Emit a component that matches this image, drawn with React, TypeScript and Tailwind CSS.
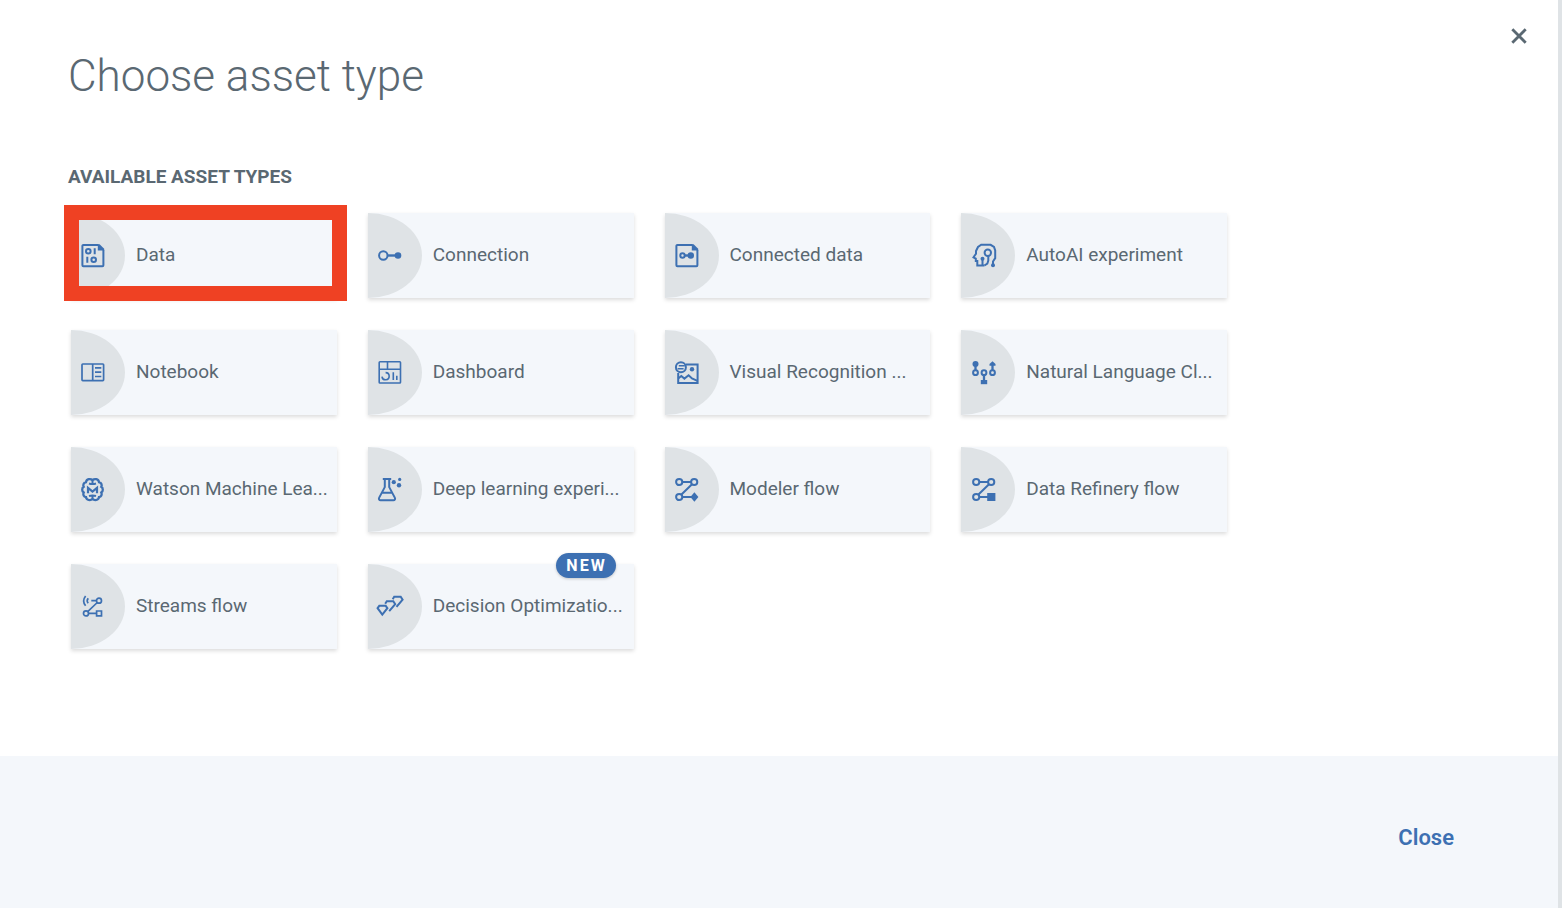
import type { ReactNode } from "react";

const documentOutline = (
  <>
    <path d="M17.5 2H2.4a1 1 0 0 0-1 1v19.3a1 1 0 0 0 1 1h19a1 1 0 0 0 1-1V7" />
    <path d="M16.8 1.2h1.8l4.6 4.6v1.6h-6.4z" fill="currentColor" stroke="none" />
  </>
);

const icons: Record<string, ReactNode> = {
  data: (
    <>
      {documentOutline}
      <circle cx="7.3" cy="8.3" r="2.3" />
      <path d="M13.7 5.3v6M6.3 13.7v6" />
      <circle cx="12.7" cy="16.7" r="2.3" />
    </>
  ),
  connection: (
    <>
      <circle cx="5.3" cy="12.5" r="4.2" />
      <path d="M9.5 12.5H19" strokeWidth="2.4" />
      <circle cx="20" cy="12.5" r="3.3" fill="currentColor" stroke="none" />
    </>
  ),
  connectedData: (
    <>
      {documentOutline}
      <circle cx="7.5" cy="12.5" r="2.2" />
      <path d="M9.7 12.5h5" strokeWidth="2.4" />
      <circle cx="15.8" cy="12.5" r="3.2" fill="currentColor" stroke="none" />
    </>
  ),
  autoAi: (
    <>
      <path d="M13.5 22.5H6.3V18H4.8v-2.4l-2.3-1.3L5 10.7V8l2-4 3.2-2.2h9.4L23 4l1.2 3.5v7.6L22 18.5V21" />
      <circle cx="16.8" cy="9.7" r="3.2" />
      <path d="M17.3 13v4.5l-1 3.2-2.8 1.8M11.5 16v6" />
      <circle cx="11.5" cy="15.8" r="2" fill="currentColor" stroke="none" />
      <circle cx="22" cy="22.2" r="2" fill="currentColor" stroke="none" />
    </>
  ),
  notebook: (
    <g strokeWidth="1.7">
      <rect x="1" y="4" width="21.6" height="16.6" rx="0.8" />
      <path d="M11.7 4v16.6M14 7.9h6.3M14 12.2h6.3M14 16.5h6.3" />
    </g>
  ),
  dashboard: (
    <g strokeWidth="1.6">
      <rect x="1.2" y="1.7" width="21.3" height="21.3" rx="0.8" />
      <path d="M1.2 9.2h21.3M9.5 1.7v7.5M15.3 12.3V20M18.8 15.7V20" />
      <path d="M7.6 12.6a3.6 3.6 0 1 1-3.6 4" />
    </g>
  ),
  visual: (
    <>
      <path d="M11 4.5h11.6v18.6H3.2v-10" />
      <circle cx="5.9" cy="7.2" r="5" />
      <path d="M3.8 5.8h6M2.6 8.8h6" strokeWidth="1.6" />
      <circle cx="17" cy="9.3" r="2.2" fill="currentColor" stroke="none" />
      <path d="M3.2 18.5 6.3 16l3.1 2.6 4.2-3.3 3.4 3.2 5.4 2.4" />
    </>
  ),
  language: (
    <>
      <circle cx="4.5" cy="4" r="3" fill="currentColor" stroke="none" />
      <path d="M4.5 6v4M21.5 5v5M13 15.5V21" strokeWidth="2.3" />
      <path d="M21.5 1.3 24.5 4v1.8h-6V4z" fill="currentColor" stroke="none" />
      <circle cx="4.5" cy="12.7" r="2.4" />
      <circle cx="13" cy="12.7" r="2.4" />
      <circle cx="21.5" cy="12.7" r="2.4" />
      <path d="M9.8 20h6.4v4.2H9.8z" fill="currentColor" stroke="none" />
    </>
  ),
  brain: (
    <>
      <path
        d="M11.5 3.2C9.5 1.3 5.5 1.8 5 5.2 2.6 5.6 1.7 8 2.7 9.8.7 11.1.7 14.2 2.7 15.5c-1 2 0 4.2 2.3 4.6.5 3.3 4.5 3.8 6.5 1.9 2 1.9 6 1.4 6.5-1.9 2.3-.4 3.3-2.6 2.3-4.6 2-1.3 2-4.4 0-5.7 1-1.8.1-4.2-2.3-4.6-.5-3.4-4.5-3.9-6.5-2Z"
        strokeWidth="2.3"
      />
      <path d="M7 16.2v-5.4l4.5 3.7 4.5-3.7v5.4" strokeWidth="2.2" />
      <path d="M11.5 3.2v3.6M8 6.5q3.5 1.2 7 0M11.5 22v-3.4M8 19q3.5-1.2 7 0" />
    </>
  ),
  flask: (
    <>
      <path d="M4.8 2.1h8.4M6.8 2.1v8L1.2 20.6c-.7 1.4 0 2.7 1.4 2.7h12.8c1.4 0 2.1-1.3 1.4-2.7L11.2 10.1v-8M4.4 15.7h9.4" />
      <g fill="currentColor" stroke="none">
        <circle cx="15.8" cy="5.2" r="2.1" />
        <circle cx="21.7" cy="2.4" r="1.6" />
        <circle cx="21" cy="8.2" r="2.2" />
      </g>
    </>
  ),
  modeler: (
    <>
      <path d="M7 5h9M17 7.3 6.2 17.8M7 20h11" />
      <circle cx="4.2" cy="5" r="3.1" />
      <circle cx="19.2" cy="5" r="3.1" />
      <circle cx="4.2" cy="20" r="3.1" />
      <path d="m19.4 15.2 4 4.8-4 4.8-4-4.8z" fill="currentColor" stroke="none" />
    </>
  ),
  refinery: (
    <>
      <path d="M8 5h9M18 7.3 7.2 17.8M8 20h11" />
      <circle cx="5.2" cy="5" r="3.1" />
      <circle cx="20.2" cy="5" r="3.1" />
      <circle cx="5.2" cy="20" r="3.1" />
      <path d="M16.2 16h8.2v8h-8.2z" fill="currentColor" stroke="none" />
    </>
  ),
  streams: (
    <g strokeWidth="1.7">
      <path d="M4.6 2Q.7 7 4.6 11.8M7.2 4.3Q5.2 7 7.2 9.2" />
      <path d="M10.3 6.7h5M16.3 8.5 6.7 17.7M7.5 19.4h7.8" />
      <circle cx="18" cy="6.7" r="2.5" />
      <circle cx="5" cy="19.4" r="2.5" />
      <path d="M15.6 17h4.9v4.9h-4.9z" />
    </g>
  ),
  optimization: (
    <g strokeWidth="2">
      <path d="M-.4 14.2 1.3 11.8h6.4l1.7 2.4-5.1 6.5z" />
      <path d="M7.2 9.7 8.8 7.3h6.5l1.9 2.9-6 6.9" />
      <path d="M14.7 5.2 16.2 2.8h6.5l1.9 2.9-6.1 7.2" />
    </g>
  ),
};

type Asset = { icon: string; label: string; selected?: boolean; badge?: string };

const assets: Asset[] = [
  { icon: "data", label: "Data", selected: true },
  { icon: "connection", label: "Connection" },
  { icon: "connectedData", label: "Connected data" },
  { icon: "autoAi", label: "AutoAI experiment" },
  { icon: "notebook", label: "Notebook" },
  { icon: "dashboard", label: "Dashboard" },
  { icon: "visual", label: "Visual Recognition ..." },
  { icon: "language", label: "Natural Language Cl..." },
  { icon: "brain", label: "Watson Machine Lea..." },
  { icon: "flask", label: "Deep learning experi..." },
  { icon: "modeler", label: "Modeler flow" },
  { icon: "refinery", label: "Data Refinery flow" },
  { icon: "streams", label: "Streams flow" },
  { icon: "optimization", label: "Decision Optimizatio...", badge: "NEW" },
];

function AssetCard({ icon, label, selected, badge }: Asset) {
  return (
    <li className="relative">
      <button
        type="button"
        className="flex h-[85px] w-full items-center bg-[#f4f7fb] text-left shadow-[0_2px_4px_rgba(0,0,0,0.14)]"
      >
        <span className="flex h-full w-[54px] shrink-0 items-center bg-[#dfe3e6] pl-[10px] text-[#3d70b2] [border-radius:0_100%_100%_0/0_50%_50%_0]">
          <svg
            viewBox="0 0 25 25"
            className="size-[25px] overflow-visible"
            fill="none"
            stroke="currentColor"
            strokeWidth="2"
            aria-hidden="true"
          >
            {icons[icon]}
          </svg>
        </span>
        <span className="ml-[11px] pb-[2px] text-[19px] leading-6 whitespace-nowrap">{label}</span>
      </button>
      {selected && (
        <span className="pointer-events-none absolute -top-2 -right-[10px] -bottom-[3px] -left-[7px] border-[15px] border-[#ef4123]" />
      )}
      {badge && (
        <span className="absolute -top-[11px] right-[18px] flex h-[25px] w-[60px] items-center justify-center rounded-full bg-[#3d70b2] pl-[2px] text-base font-bold tracking-[2px] text-white shadow-[0_1px_3px_rgba(0,0,0,0.2)]">
          {badge}
        </span>
      )}
    </li>
  );
}

export default function App() {
  return (
    <div className="flex min-h-screen flex-col border-r-4 border-[#dfe3e6] bg-white font-['Roboto',sans-serif] text-[#5a6872]">
      <main className="relative flex-1 px-[68px] pt-12 pb-[104px]">
        <button
          type="button"
          aria-label="Close dialog"
          className="absolute top-5 right-[23px] flex size-8 items-center justify-center"
        >
          <svg viewBox="0 0 16 16" className="size-4" stroke="currentColor" strokeWidth="2.8" aria-hidden="true">
            <path d="m1.3 1.3 13.4 13.4M14.7 1.3 1.3 14.7" />
          </svg>
        </button>
        <h1 className="text-[44px] leading-[56px] font-light">Choose asset type</h1>
        <h2 className="mt-[61px] text-[19px] leading-6 font-bold">AVAILABLE ASSET TYPES</h2>
        <ul className="mt-6 ml-[3px] grid max-w-[1156px] grid-cols-4 gap-x-[31px] gap-y-8">
          {assets.map((asset) => (
            <AssetCard key={asset.label} {...asset} />
          ))}
        </ul>
      </main>
      <footer className="flex h-[152px] items-center justify-end bg-[#f4f7fb] pt-3 pr-[104px]">
        <button type="button" className="text-[22px] leading-7 font-semibold text-[#3d70b2]">
          Close
        </button>
      </footer>
    </div>
  );
}
